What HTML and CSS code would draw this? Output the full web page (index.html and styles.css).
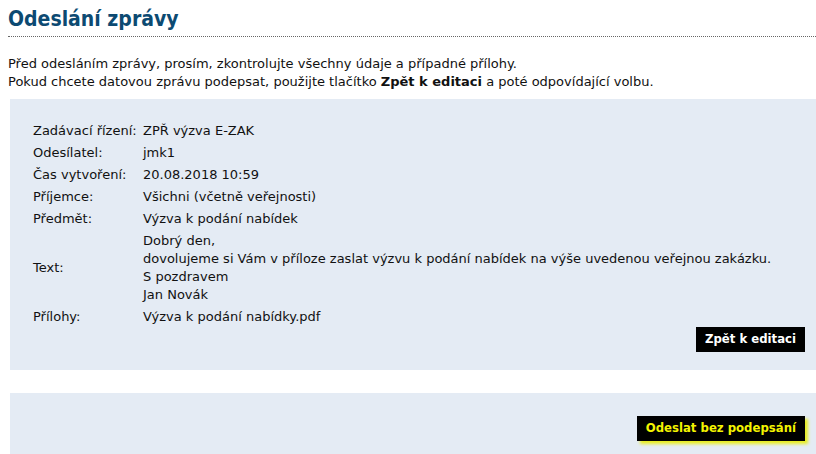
FILE: index.html
```html
<!DOCTYPE html>
<html lang="cs">
<head>
    <meta charset="UTF-8">
    <title>Odeslání zprávy</title>
    <link rel="stylesheet" href="styles.css">
</head>
<body>
    <h1 class="page-title">Odeslání zprávy</h1>

    <p class="intro">
        Před odesláním zprávy, prosím, zkontrolujte všechny údaje a případné přílohy.<br>
        Pokud chcete datovou zprávu podepsat, použijte tlačítko <b>Zpět k editaci</b> a poté odpovídající volbu.
    </p>

    <div class="panel">
        <table class="summary">
            <tr><th>Zadávací řízení:</th><td>ZPŘ výzva E-ZAK</td></tr>
            <tr><th>Odesílatel:</th><td>jmk1</td></tr>
            <tr><th>Čas vytvoření:</th><td>20.08.2018 10:59</td></tr>
            <tr><th>Příjemce:</th><td>Všichni (včetně veřejnosti)</td></tr>
            <tr><th>Předmět:</th><td>Výzva k podání nabídek</td></tr>
            <tr>
                <th>Text:</th>
                <td>Dobrý den,<br>dovolujeme si Vám v příloze zaslat výzvu k podání nabídek na výše uvedenou veřejnou zakázku.<br>S pozdravem<br>Jan Novák</td>
            </tr>
            <tr><th>Přílohy:</th><td>Výzva k podání nabídky.pdf</td></tr>
        </table>
        <div class="actions">
            <button class="btn">Zpět k editaci</button>
        </div>
    </div>

    <div class="panel panel-send">
        <div class="actions">
            <button class="btn btn-send">Odeslat bez podepsání</button>
        </div>
    </div>
</body>
</html>
```

FILE: styles.css
```css
html, body {
    overflow: hidden;
}
body {
    margin: 8px 0 0 8px;
    font-family: "DejaVu Sans", sans-serif;
    font-size: 13px;
    line-height: 18px;
    color: #111;
    background: white;
}
.page-title {
    margin: 0;
    padding: 0 0 6px 0;
    font-family: "DejaVu Sans Condensed", "DejaVu Sans", sans-serif;
    font-size: 21px;
    line-height: 22px;
    color: #0c4a72;
    border-bottom: 1px dotted #666;
}
.intro {
    margin: 18px 0 8px 0;
}
.panel {
    margin-left: 2px;
    background: #e4ebf4;
    padding: 21px 11px 18px 21px;
}
.summary {
    border-collapse: collapse;
}
.summary th,
.summary td {
    padding: 2px 2px;
    text-align: left;
    vertical-align: middle;
    font-weight: normal;
}
.summary th {
    width: 106px;
}
.summary tr:last-child th,
.summary tr:last-child td {
    padding-bottom: 1px;
}
.actions {
    text-align: right;
}
.btn {
    background: black;
    color: white;
    border: none;
    padding: 4px 9px 5px;
    font-family: "DejaVu Sans Condensed", "DejaVu Sans", sans-serif;
    font-size: 13px;
    font-weight: bold;
    line-height: 16px;
    cursor: pointer;
}
.panel-send {
    margin-top: 23px;
    padding-top: 23px;
    padding-bottom: 0;
    height: 38px;
}
.btn-send {
    color: #f4f400;
    box-shadow: 3px 3px 3px #e8ee20;
}
```
